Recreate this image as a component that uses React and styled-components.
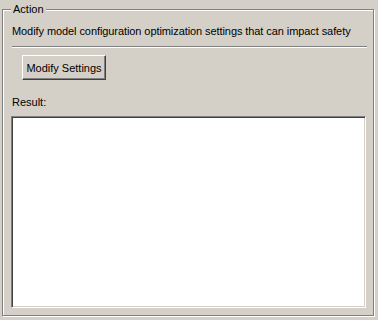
import React from "react";
import styled, { createGlobalStyle } from "styled-components";

const Global = createGlobalStyle`
  html, body { margin: 0; padding: 0; background: #d4d0c8; }
  body { width: 378px; height: 320px; overflow: hidden; }
`;

const Page = styled.div`
  width: 378px;
  height: 320px;
  padding: 9px 0 0 2px;
  box-sizing: border-box;
  background: #d4d0c8;
  font-family: "Liberation Sans", Arial, sans-serif;
  font-size: 11px;
  color: #000;
`;

const Group = styled.div`
  position: relative;
  box-sizing: border-box;
  width: 372px;
  height: 307px;
  border: 1px solid #808080;
  box-shadow: inset 1px 1px 0 #fff, 1px 1px 0 #fff;
  padding: 14px 6px 0 9px;
  display: flex;
  flex-direction: column;
`;

const Legend = styled.span`
  position: absolute;
  left: 8px;
  top: -8px;
  padding: 0 2px;
  background: #d4d0c8;
  line-height: 14px;
`;

const Description = styled.div`
  line-height: 14px;
  white-space: nowrap;
  letter-spacing: -0.08px;
`;

const Separator = styled.div`
  margin-top: 8px;
  height: 0;
  border-top: 1px solid #808080;
  border-bottom: 1px solid #fff;
`;

const Button = styled.button`
  align-self: flex-start;
  margin: 7px 0 0 10px;
  width: 84px;
  height: 25px;
  box-sizing: border-box;
  padding: 0;
  font: inherit;
  color: #000;
  background: #d4d0c8;
  border: 1px solid;
  border-color: #fff #404040 #404040 #fff;
  box-shadow: inset -1px -1px 0 #808080;
  outline: none;
`;

const Label = styled.div`
  margin-top: 15px;
  line-height: 14px;
`;

const ResultBox = styled.textarea`
  margin: 7px 0 0 -1px;
  width: 355px;
  height: 192px;
  box-sizing: border-box;
  resize: none;
  background: #fff;
  border: 1px solid;
  border-color: #808080 #fff #fff #808080;
  box-shadow: inset 1px 1px 0 #404040, inset -1px -1px 0 #d4d0c8;
  outline: none;
  padding: 2px;
  font: inherit;
`;

export default function App() {
  return (
    <>
      <Global />
      <Page>
        <Group>
          <Legend>Action</Legend>
          <Description>
            Modify model configuration optimization settings that can impact safety
          </Description>
          <Separator />
          <Button>Modify Settings</Button>
          <Label>Result:</Label>
          <ResultBox readOnly />
        </Group>
      </Page>
    </>
  );
}
